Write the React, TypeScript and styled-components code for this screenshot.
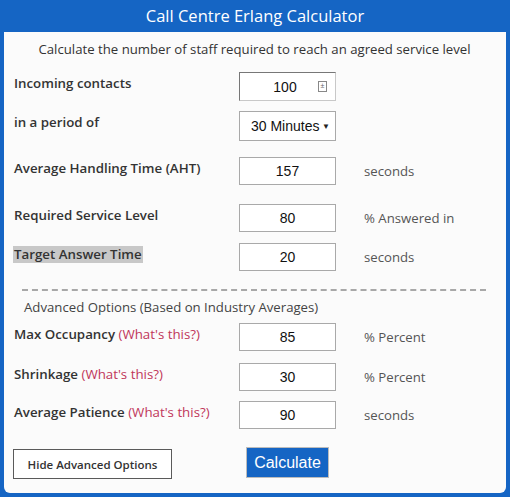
import React from 'react';
import styled, { createGlobalStyle } from 'styled-components';

const GlobalStyle = createGlobalStyle`
  html, body {
    margin: 0;
    padding: 0;
    background: #1565c4;
  }
  body {
    font-family: 'Open Sans', 'Liberation Sans', sans-serif;
  }
`;

const Frame = styled.div`
  width: 510px;
  height: 497px;
  box-sizing: border-box;
  background: #1565c4;
  padding: 0 4px 4px 4px;
  display: flex;
  flex-direction: column;
`;

const Title = styled.h1`
  margin: 0;
  height: 32px;
  line-height: 31px;
  text-align: center;
  color: #fff;
  font-size: 16.5px;
  font-weight: 500;
`;

const Panel = styled.div`
  flex: 1;
  background: #fbfbfb;
  border-radius: 0 0 6px 6px;
  padding: 8px 10px 0 9px;
  box-sizing: border-box;
`;

const Intro = styled.p`
  margin: 0 0 14px;
  text-align: center;
  font-size: 13.2px;
  color: #333;
  line-height: 18px;
`;

const Row = styled.div<{ $top: number }>`
  display: grid;
  grid-template-columns: 226px 97px auto;
  align-items: start;
  margin-top: ${(p) => p.$top}px;
`;

const Label = styled.span<{ $selected?: boolean }>`
  justify-self: start;
  font-size: 13.3px;
  font-weight: 600;
  color: #333;
  line-height: 17px;
  margin-top: 3px;
  padding: 0 1px;
  background: ${(p) => (p.$selected ? '#c8c8c8' : 'transparent')};
`;

const Help = styled.span`
  font-weight: 400;
  color: #c0365a;
`;

const Field = styled.input`
  width: 97px;
  height: 28px;
  box-sizing: border-box;
  border: 1px solid #a9a9a9;
  background: #fff;
  text-align: center;
  font-family: 'Liberation Sans', Arial, sans-serif;
  font-size: 14px;
  color: #111;
  padding: 0;
  outline: none;
`;

const SpinBox = styled.div`
  width: 97px;
  height: 29px;
  box-sizing: border-box;
  border: 1px solid #c8c8c8;
  border-top-color: #777;
  border-left-color: #777;
  background: #fff;
  display: flex;
  align-items: center;
  padding: 0 8px 0 0;
  font-family: 'Liberation Sans', Arial, sans-serif;
  font-size: 14px;
  color: #111;
`;

const SpinValue = styled.span`
  flex: 1;
  text-align: center;
  padding-left: 12px;
`;

const SpinIcon = styled.span`
  width: 7px;
  height: 9px;
  border: 1px solid #888;
  font-size: 7px;
  line-height: 8px;
  text-align: center;
  color: #666;
`;

const SelectBox = styled.div`
  width: 97px;
  height: 30px;
  box-sizing: border-box;
  border: 1px solid #a9a9a9;
  background: #fff;
  display: flex;
  align-items: center;
  justify-content: space-between;
  padding: 0 5px 0 11px;
  white-space: nowrap;
  font-family: 'Liberation Sans', Arial, sans-serif;
  font-size: 14px;
  color: #111;
`;

const Caret = styled.span`
  font-size: 8px;
  color: #222;
`;

const Unit = styled.span`
  font-size: 13.2px;
  color: #555;
  line-height: 17px;
  margin: 6px 0 0 28px;
`;

const Divider = styled.hr`
  margin: 18px 10px 0 9px;
  border: 0;
  border-top: 2px dashed #a8a8a8;
`;

const SectionTitle = styled.div`
  margin: 8px 0 0 11px;
  font-size: 13.2px;
  color: #444;
  line-height: 17px;
`;

const Actions = styled.div`
  display: flex;
  align-items: flex-start;
  margin-top: 18px;
`;

const GhostButton = styled.button`
  width: 159px;
  height: 30px;
  margin-top: 2px;
  border: 1px solid #5a5a5a;
  background: #fff;
  font-family: 'Open Sans', sans-serif;
  font-size: 11.5px;
  font-weight: 600;
  color: #333;
  padding: 0;
`;

const PrimaryButton = styled.button`
  width: 83px;
  height: 31px;
  margin-left: 74px;
  border: 1px solid #bcbcbc;
  background: #1565c4;
  color: #fff;
  font-family: 'Liberation Sans', Arial, sans-serif;
  font-size: 16px;
  padding: 0;
`;

const App: React.FC = () => {
  return (
    <Frame>
      <GlobalStyle />
      <Title>Call Centre Erlang Calculator</Title>
      <Panel>
        <Intro>Calculate the number of staff required to reach an agreed service level</Intro>
        <Row $top={0}>
          <Label>Incoming contacts</Label>
          <SpinBox>
            <SpinValue>100</SpinValue>
            <SpinIcon>±</SpinIcon>
          </SpinBox>
        </Row>
        <Row $top={10}>
          <Label>in a period of</Label>
          <SelectBox>
            30 Minutes <Caret>▼</Caret>
          </SelectBox>
        </Row>
        <Row $top={16}>
          <Label>Average Handling Time (AHT)</Label>
          <Field readOnly value="157" />
          <Unit>seconds</Unit>
        </Row>
        <Row $top={19}>
          <Label>Required Service Level</Label>
          <Field readOnly value="80" />
          <Unit>% Answered in</Unit>
        </Row>
        <Row $top={11}>
          <Label $selected>Target Answer Time</Label>
          <Field readOnly value="20" />
          <Unit>seconds</Unit>
        </Row>
        <Divider />
        <SectionTitle>Advanced Options (Based on Industry Averages)</SectionTitle>
        <Row $top={7}>
          <Label>
            Max Occupancy <Help>(What's this?)</Help>
          </Label>
          <Field readOnly value="85" />
          <Unit>% Percent</Unit>
        </Row>
        <Row $top={12}>
          <Label>
            Shrinkage <Help>(What's this?)</Help>
          </Label>
          <Field readOnly value="30" />
          <Unit>% Percent</Unit>
        </Row>
        <Row $top={10}>
          <Label>
            Average Patience <Help>(What's this?)</Help>
          </Label>
          <Field readOnly value="90" />
          <Unit>seconds</Unit>
        </Row>
        <Actions>
          <GhostButton>Hide Advanced Options</GhostButton>
          <PrimaryButton>Calculate</PrimaryButton>
        </Actions>
      </Panel>
    </Frame>
  );
};

export default App;
